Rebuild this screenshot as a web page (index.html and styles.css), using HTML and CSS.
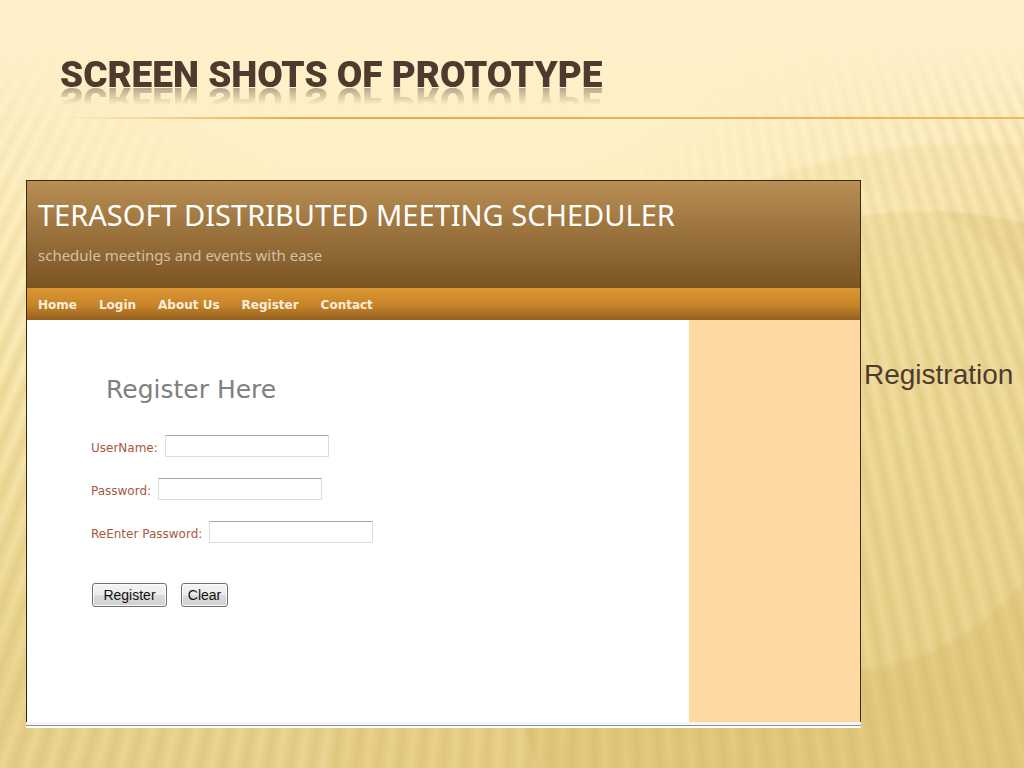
FILE: index.html
```
<!DOCTYPE html>
<html lang="en">
<head>
    <meta charset="UTF-8">
    <meta name="viewport" content="width=device-width, initial-scale=1.0">
    <title>Screen Shots of Prototype</title>
    <link rel="stylesheet" href="styles.css">
</head>
<body>
    <header class="slide-header">
        <h1>SCREEN SHOTS OF PROTOTYPE</h1>
    </header>

    <main class="slide-content">
        <section class="app">
            <div class="banner">
                <h2>TERASOFT DISTRIBUTED MEETING SCHEDULER</h2>
                <p>schedule meetings and events with ease</p>
            </div>
            <nav class="menu">
                <a href="#">Home</a>
                <a href="#">Login</a>
                <a href="#">About Us</a>
                <a href="#">Register</a>
                <a href="#">Contact</a>
            </nav>
            <div class="columns">
                <form class="register-form">
                    <h3>Register Here</h3>
                    <div class="field">
                        <label for="username">UserName:</label>
                        <input type="text" id="username">
                    </div>
                    <div class="field">
                        <label for="password">Password:</label>
                        <input type="password" id="password">
                    </div>
                    <div class="field">
                        <label for="repassword">ReEnter Password:</label>
                        <input type="password" id="repassword">
                    </div>
                    <div class="buttons">
                        <button type="button" class="btn-register">Register</button>
                        <button type="reset">Clear</button>
                    </div>
                </form>
                <aside class="sidebar"></aside>
            </div>
            <div class="app-bottom"></div>
        </section>
        <p class="caption">Registration</p>
    </main>
</body>
</html>
```
FILE: styles.css
```
* {
    box-sizing: border-box;
}

body {
    margin: 0;
    min-height: 100vh;
    position: relative;
    background:
        radial-gradient(circle 245px at 835px 430px, rgba(255, 244, 190, 0.24) 97%, transparent 100%),
        radial-gradient(circle 415px at 925px 624px, rgba(212, 184, 98, 0.28) 99%, transparent 100%),
        radial-gradient(circle 650px at 980px 790px, rgba(226, 190, 110, 0.16) 99%, transparent 100%),
        linear-gradient(#fef0ca, #fef0c4 22%, #faeab4 48%, #f1dfa0 72%, #ead592 90%, #ead592);
    color: #4e3b30;
    font-family: "Liberation Sans", Arial, sans-serif;
}

/* Fan of rays behind the slide */
body::before {
    content: "";
    position: absolute;
    inset: 0;
    z-index: -1;
    background:
        linear-gradient(#fef0ca 5%, rgba(254, 240, 202, 0) 16%),
        repeating-conic-gradient(from 0deg at 57% -950px,
            rgba(205, 175, 90, 0) 0deg,
            rgba(205, 175, 90, 0.32) 0.36deg,
            rgba(205, 175, 90, 0) 0.72deg);
    -webkit-mask-image: radial-gradient(ellipse 60% 50% at 42% 0, transparent 50%, #000 120%);
    mask-image: radial-gradient(ellipse 60% 50% at 42% 0, transparent 50%, #000 120%);
}

h1, h2, h3, p {
    margin: 0;
    font-weight: normal;
}

/* Slide title */
.slide-header {
    padding: 50px 0 0 60px;
    margin-bottom: 61px;
}

.slide-header::after {
    content: "";
    display: block;
    height: 2px;
    margin-top: 17px;
    background: linear-gradient(to right, transparent, #eba94a 25%, #eabb5c);
}

.slide-header h1 {
    display: inline-block;
    vertical-align: top;
    font-family: Roboto, "Liberation Sans", sans-serif;
    font-size: 37px;
    font-weight: 900;
    line-height: 50px;
    -webkit-box-reflect: below -25px linear-gradient(transparent 40%, rgba(0, 0, 0, 0.7));
}

.slide-content {
    display: grid;
    grid-template-columns: minmax(0, 1fr) 160px;
    column-gap: 3px;
    padding-left: 26px;
}

/* Application window */
.app {
    font-family: "DejaVu Sans", Verdana, sans-serif;
    border: 1px solid #3a2a10;
    border-bottom: none;
    background: #fff;
}

.banner {
    height: 107px;
    padding: 15px 11px;
    background: linear-gradient(#b88e54, #7b5424);
    font-family: "Noto Sans", Tahoma, sans-serif;
}

.banner h2 {
    color: #fff;
    font-size: 29px;
    line-height: 38px;
    white-space: nowrap;
}

.banner p {
    margin-top: 9px;
    color: #d2c1a8;
    font-size: 15px;
    line-height: 24px;
}

.menu {
    display: flex;
    gap: 22px;
    padding: 2px 11px 0;
    background: linear-gradient(#dc9632, #c68429 55%, #93601f);
}

.menu a {
    color: #fbeedb;
    font-size: 12px;
    font-weight: bold;
    line-height: 30px;
    text-decoration: none;
}

.columns {
    display: grid;
    grid-template-columns: minmax(0, 1fr) 171px;
    min-height: 402px;
}

.sidebar {
    background: #ffd9a3;
}

.register-form {
    padding: 52px 64px;
}

.register-form h3 {
    margin: 0 0 27px 15px;
    color: #808080;
    font-size: 25px;
    line-height: 36px;
}

.field {
    display: flex;
    gap: 7px;
    margin-bottom: 17px;
}

.field label {
    color: #a8583c;
    font-size: 12px;
    line-height: 26px;
}

.field input {
    width: 164px;
    height: 22px;
    padding: 2px 4px;
    border: 1px solid #dcdcdc;
    border-top-color: #a4a4a4;
    border-radius: 1px;
    background: #fff;
}

.buttons {
    display: flex;
    gap: 14px;
    margin: 36px 0 0 1px;
}

.buttons button {
    width: 47px;
    height: 24px;
    padding: 0;
    border: 1px solid #707070;
    border-radius: 3px;
    background: linear-gradient(#f4f4f4, #ececec 50%, #dcdcdc 50%, #cfcfcf);
    box-shadow: inset 0 0 0 1px #fafafa;
    color: #111;
    font-family: "Liberation Sans", Arial, sans-serif;
    font-size: 14px;
}

.buttons .btn-register {
    width: 75px;
}

.app-bottom {
    height: 6px;
    margin: 0 -1px;
    background: linear-gradient(#f4f4f4 3px, #8f8f98 3px, #8f8f98 4px, #fff 4px);
}

.caption {
    padding-top: 178px;
    font-size: 28px;
    line-height: 34px;
}
```
